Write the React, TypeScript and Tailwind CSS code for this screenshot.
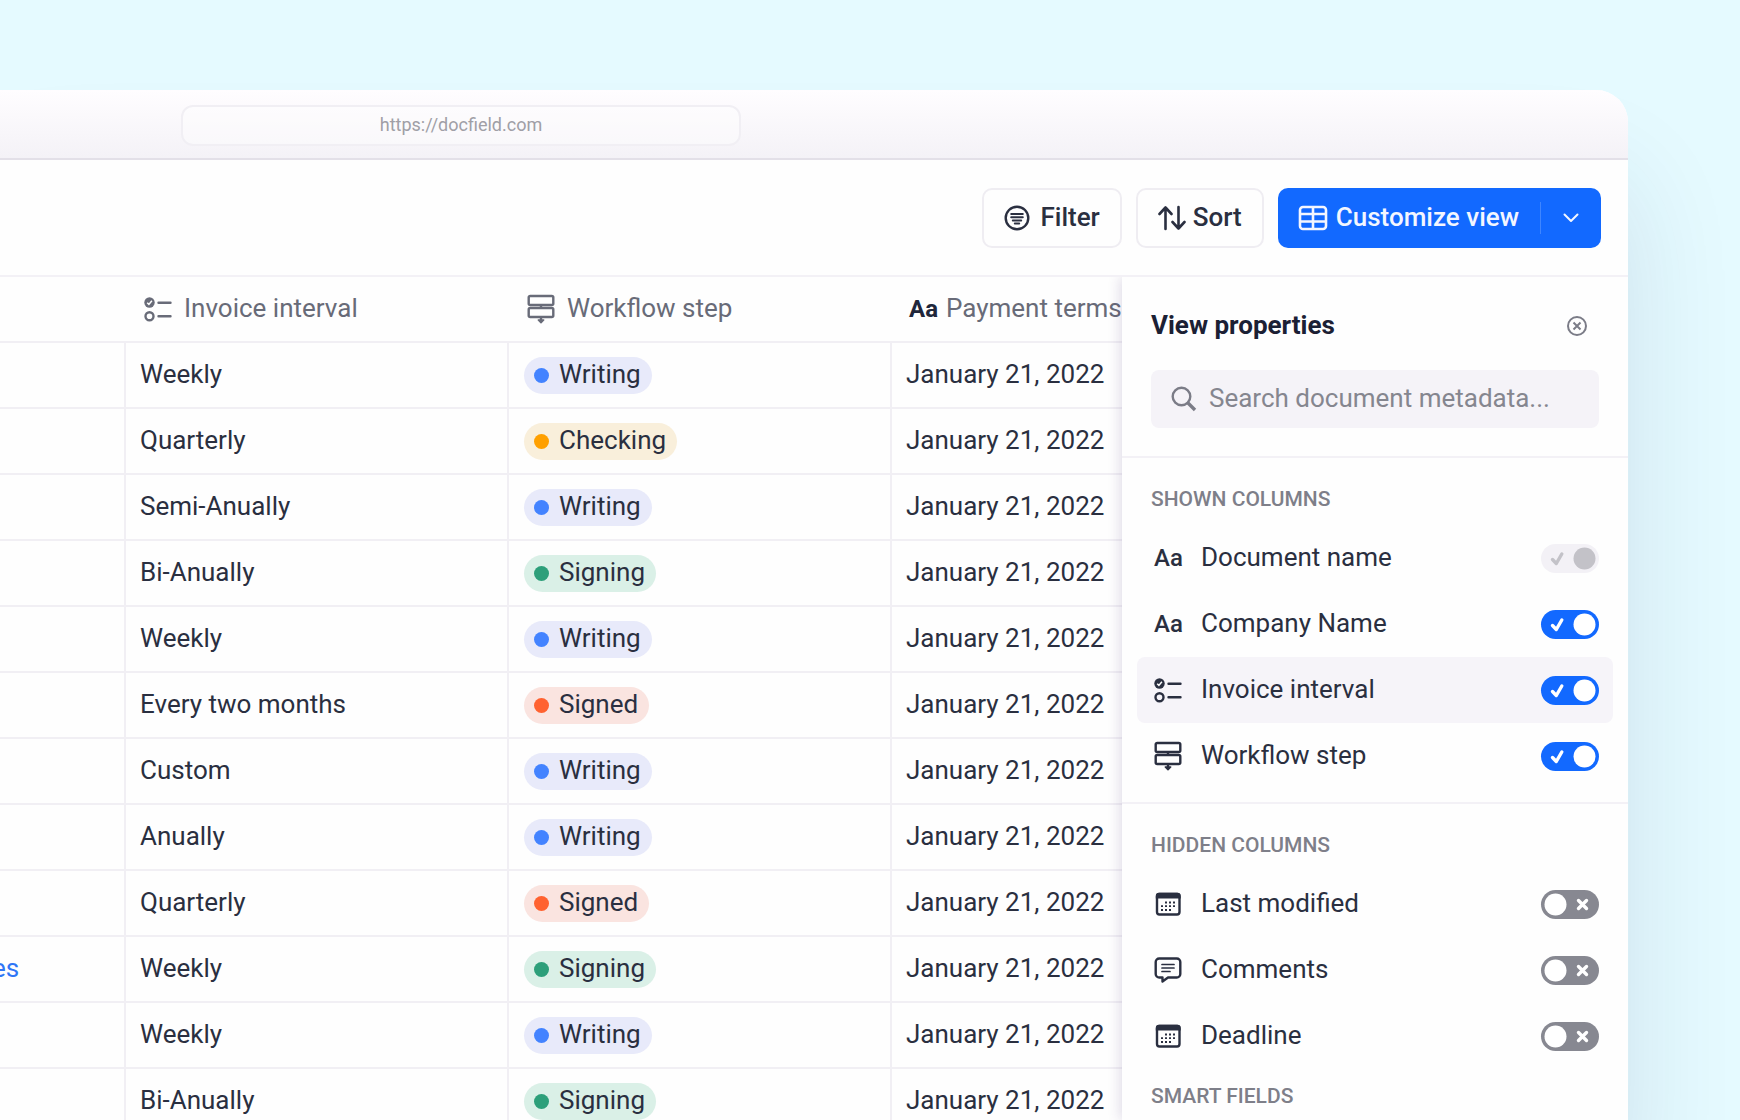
import { useState, type ReactNode } from "react";

type Step = "Writing" | "Checking" | "Signing" | "Signed";

const rows: { company?: string; interval: string; step: Step }[] = [
  { interval: "Weekly", step: "Writing" },
  { interval: "Quarterly", step: "Checking" },
  { interval: "Semi-Anually", step: "Writing" },
  { interval: "Bi-Anually", step: "Signing" },
  { interval: "Weekly", step: "Writing" },
  { interval: "Every two months", step: "Signed" },
  { interval: "Custom", step: "Writing" },
  { interval: "Anually", step: "Writing" },
  { interval: "Quarterly", step: "Signed" },
  { company: "es", interval: "Weekly", step: "Signing" },
  { interval: "Weekly", step: "Writing" },
  { interval: "Bi-Anually", step: "Signing" },
];

const stepStyles: Record<Step, { pill: string; dot: string }> = {
  Writing: { pill: "bg-[#e8eafa]", dot: "bg-[#4383ff]" },
  Checking: { pill: "bg-[#f9efdb]", dot: "bg-[#ffa000]" },
  Signing: { pill: "bg-[#daf0e7]", dot: "bg-[#2d9f7a]" },
  Signed: { pill: "bg-[#fae4e0]", dot: "bg-[#ff6230]" },
};

function ListIcon() {
  return (
    <svg width="28" height="28" viewBox="0 0 28 28" fill="none" stroke="currentColor" strokeWidth="2.4">
      <circle cx="5.5" cy="7.5" r="5.2" fill="currentColor" stroke="none" />
      <path d="M3.2 7.7l1.7 1.7 3-3.6" stroke="white" strokeWidth="1.5" />
      <circle cx="5.5" cy="21.2" r="4" />
      <path d="M14.5 7.8h12M14.5 21.2h12" strokeLinecap="round" />
    </svg>
  );
}

function WorkflowIcon() {
  return (
    <svg width="28" height="30" viewBox="0 0 28 30" fill="none" stroke="currentColor" strokeWidth="2.4">
      <rect x="1.7" y="2" width="24.6" height="9" rx="1.5" />
      <rect x="1.7" y="14" width="24.6" height="9" rx="1.5" />
      <path d="M14 11v3M14 23v3" />
      <path d="M11.3 26h5.4L14 28.8z" fill="currentColor" strokeWidth="1.5" strokeLinejoin="round" />
    </svg>
  );
}

function CalendarIcon() {
  return (
    <svg width="28" height="28" viewBox="0 0 28 28" fill="none" stroke="currentColor" strokeWidth="2.4">
      <rect x="3" y="4" width="22.5" height="20.5" rx="2.5" />
      <path d="M1.8 6a3.2 3.2 0 0 1 3.2-3.2h18.5a3.2 3.2 0 0 1 3.2 3.2v2.5H1.800z" fill="currentColor" stroke="none" />
      <path d="M11 12.5h12M7 16.2h16M7 20h12" strokeDasharray="2 2" strokeWidth="1.8" />
    </svg>
  );
}

function CommentIcon() {
  return (
    <svg width="28" height="28" viewBox="0 0 28 28" fill="none" stroke="currentColor" strokeWidth="2.4" strokeLinejoin="round">
      <path d="M5.2 2.5h17.6a3.5 3.5 0 0 1 3.5 3.5v12a3.5 3.5 0 0 1-3.5 3.5H14L8.5 25.5V21.5H5.2A3.5 3.5 0 0 1 1.7 18V6A3.5 3.5 0 0 1 5.2 2.5z" />
      <path d="M8 8.5h12M8 12h12M8 15.5h8" strokeWidth="1.7" strokeLinecap="round" />
    </svg>
  );
}

function FilterIcon() {
  return (
    <svg width="26" height="26" viewBox="0 0 26 26" fill="none" stroke="currentColor" strokeWidth="2.4" strokeLinecap="round">
      <circle cx="13" cy="13" r="11.3" />
      <path d="M7.2 9h11.6M7.2 12.2h11.6M8.8 15.4h8.4M10.8 18.6h4.4" strokeWidth="2" />
    </svg>
  );
}

function SortIcon() {
  return (
    <svg width="28" height="26" viewBox="0 0 28 26" fill="none" stroke="currentColor" strokeWidth="2.6" strokeLinecap="round" strokeLinejoin="round">
      <path d="M7.5 24V2.5M1.5 9l6-6.5 6 6.5M20.5 2v21.5M14.5 17l6 6.5 6-6.5" />
    </svg>
  );
}

function TableIcon() {
  return (
    <svg width="30" height="26" viewBox="0 0 30 26" fill="none" stroke="currentColor" strokeWidth="2.6">
      <rect x="2" y="2" width="26" height="22" rx="3" />
      <path d="M15 2v22M2 9h26M2 16.5h26" />
    </svg>
  );
}

function SearchIcon() {
  return (
    <svg width="26" height="26" viewBox="0 0 26 26" fill="none" stroke="currentColor" className="shrink-0">
      <circle cx="10.5" cy="10.5" r="8.8" strokeWidth="2.4" />
      <path d="M17 17l7 7" strokeWidth="3.4" />
    </svg>
  );
}

function Pill({ step }: { step: Step }) {
  const style = stepStyles[step];
  return (
    <span className={`flex h-[37px] w-fit items-center gap-[10px] rounded-full pl-[10px] pr-[11px] ${style.pill}`}>
      <span className={`size-[15px] rounded-full ${style.dot}`} />
      <span className="pb-[2px]">{step}</span>
    </span>
  );
}

function Toggle({ id, defaultOn, disabled = false }: { id: string; defaultOn: boolean; disabled?: boolean }) {
  const [on, setOn] = useState(defaultOn);
  return (
    <span className="grid">
      <input
        id={id}
        type="checkbox"
        role="switch"
        checked={on}
        disabled={disabled}
        onChange={(e) => setOn(e.target.checked)}
        className="col-start-1 row-start-1 h-[29px] w-[58px] appearance-none rounded-full bg-[#878891] checked:bg-[#1269ff] disabled:bg-[#f3f1f6]"
      />
      <svg
        viewBox="0 0 58 29"
        className={`pointer-events-none col-start-1 row-start-1 h-[29px] w-[58px] ${disabled ? "text-[#c3c2c8]" : "text-white"}`}
        fill="none"
        stroke="currentColor"
        strokeWidth="3.4"
        strokeLinecap="round"
      >
        <circle cx={on ? 43.5 : 14.5} cy="14.5" r="11" fill="currentColor" stroke="none" />
        {on ? <path d="M11.5 15.5l3.8 4 5.500-9.500" strokeLinejoin="round" /> : <path d="M37.5 10.5l8 8M45.5 10.5l-8 8" />}
      </svg>
    </span>
  );
}

function Aa() {
  return <span className="text-[24px] font-medium">Aa</span>;
}

type Field = { id: string; label: string; icon: ReactNode; on: boolean; disabled?: boolean; active?: boolean };

const shown: Field[] = [
  { id: "document-name", label: "Document name", icon: <Aa />, on: true, disabled: true },
  { id: "company-name", label: "Company Name", icon: <Aa />, on: true },
  { id: "invoice-interval", label: "Invoice interval", icon: <ListIcon />, on: true, active: true },
  { id: "workflow-step", label: "Workflow step", icon: <WorkflowIcon />, on: true },
];

const hidden: Field[] = [
  { id: "last-modified", label: "Last modified", icon: <CalendarIcon />, on: false },
  { id: "comments", label: "Comments", icon: <CommentIcon />, on: false },
  { id: "deadline", label: "Deadline", icon: <CalendarIcon />, on: false },
];

function FieldList({ fields }: { fields: Field[] }) {
  return (
    <ul className="px-[15px]">
      {fields.map((field) => (
        <li key={field.id} className={`flex h-[66px] items-center rounded-lg px-[14px] ${field.active ? "bg-[#f6f4f9]" : ""}`}>
          <span className="flex w-[50px] items-center pl-[3px]">{field.icon}</span>
          <label htmlFor={field.id} className="flex-1 pb-[3px]">
            {field.label}
          </label>
          <Toggle id={field.id} defaultOn={field.on} disabled={field.disabled} />
        </li>
      ))}
    </ul>
  );
}

function ViewProperties() {
  return (
    <aside className="relative z-10 w-[506px] shrink-0 bg-[#fefefe] shadow-[-2px_0_12px_rgba(60,40,110,0.16)]">
      <div className="border-b-2 border-[#f3f1f6] px-[29px] pb-7 pt-8">
        <div className="flex h-8 items-center justify-between">
          <h2 className="font-bold text-[#1b2034]">View properties</h2>
          <button type="button" aria-label="Close" className="mr-3 pt-[2px] text-[#7b7c87]">
            <svg width="20" height="20" viewBox="0 0 20 20" fill="none" stroke="currentColor" strokeWidth="2">
              <circle cx="10" cy="10" r="9" />
              <path d="M6.5 6.5l7 7M13.5 6.5l-7 7" />
            </svg>
          </button>
        </div>
        <label className="mt-[29px] flex h-[58px] items-center gap-3 rounded-lg bg-[#f5f3f8] pl-5 text-[#7b7c87]">
          <SearchIcon />
          <input
            type="search"
            aria-label="Search document metadata"
            placeholder="Search document metadata..."
            className="min-w-0 flex-1 bg-transparent pb-[2px] outline-none placeholder:text-[#85868f]"
          />
        </label>
      </div>
      <section className="border-b-2 border-[#f3f1f6] pb-[13px]">
        <h3 className="px-[29px] pb-[11px] pt-[26px] text-[21px] font-medium leading-[30px] text-[#7e7f89]">SHOWN COLUMNS</h3>
        <FieldList fields={shown} />
      </section>
      <section>
        <h3 className="px-[29px] pb-[11px] pt-[26px] text-[21px] font-medium leading-[30px] text-[#7e7f89]">HIDDEN COLUMNS</h3>
        <FieldList fields={hidden} />
      </section>
      <h3 className="px-[29px] pt-3 text-[21px] font-medium leading-[30px] text-[#7e7f89]">SMART FIELDS</h3>
    </aside>
  );
}

function DocumentsTable() {
  const line = "border-[#f1eff4]";
  return (
    <div className="min-w-0 flex-1 overflow-hidden">
      <table className="w-full table-fixed border-separate border-spacing-0 whitespace-nowrap text-left">
        <colgroup>
          <col className="w-[124px]" />
          <col className="w-[383px]" />
          <col className="w-[383px]" />
          <col />
        </colgroup>
        <thead className="text-[#686b78]">
          <tr className="h-[66px]">
            <th className={`border-b-2 ${line}`} aria-label="Company" />
            <th className={`border-b-2 pl-5 font-normal ${line}`}>
              <span className="flex items-center gap-3">
                <ListIcon />
                <span className="pb-[2px]">Invoice interval</span>
              </span>
            </th>
            <th className={`border-b-2 pl-5 font-normal ${line}`}>
              <span className="flex items-center gap-3">
                <WorkflowIcon />
                <span className="pb-[2px]">Workflow step</span>
              </span>
            </th>
            <th className={`border-b-2 pl-[19px] font-normal ${line}`}>
              <span className="flex items-center gap-2">
                <span className="text-[24px] font-bold text-[#20263a]">Aa</span>
                <span className="pb-[2px]">Payment terms</span>
              </span>
            </th>
          </tr>
        </thead>
        <tbody>
          {rows.map((row, i) => (
            <tr key={i} className="h-[66px]">
              <td className={`border-b-2 pb-[2px] ${line}`}>
                {row.company && (
                  <a href="#company" className="-ml-2 text-[#2f76f6]">
                    {row.company}
                  </a>
                )}
              </td>
              <td className={`border-b-2 border-l-2 pb-[2px] pl-[14px] ${line}`}>{row.interval}</td>
              <td className={`border-b-2 border-l-2 pl-[15px] ${line}`}>
                <Pill step={row.step} />
              </td>
              <td className={`border-b-2 border-l-2 pb-[2px] pl-[14px] ${line}`}>January 21, 2022</td>
            </tr>
          ))}
        </tbody>
      </table>
    </div>
  );
}

export default function App() {
  return (
    <div className="flex h-screen flex-col overflow-hidden bg-[#e5faff] pt-[90px] font-['Roboto',sans-serif] text-[26px] leading-8 text-[#2a2f40]">
      <div className="mr-28 flex min-h-0 flex-1 flex-col rounded-tr-[32px] bg-[#fefefe] shadow-[0_90px_110px_rgba(30,50,100,0.12)]">
        <header className="flex h-[70px] shrink-0 items-center rounded-tr-[32px] border-b-2 border-[#e3e0e8] bg-gradient-to-b from-[#fffdff] to-[#f4f2f7] pl-[181px] pt-[2px]">
          <div className="flex h-[41px] w-[560px] items-center justify-center rounded-xl border-2 border-[#f1eff4] bg-white/40 text-[18px] text-[#a09fa6]">
            https://docfield.com
          </div>
        </header>
        <div className="flex h-[117px] shrink-0 items-center justify-end gap-[14px] border-b-2 border-[#f3f1f6] pr-[27px] font-medium">
          <button type="button" className="flex h-[60px] items-center gap-[10px] rounded-[10px] border-2 border-[#efedf2] px-5">
            <FilterIcon />
            <span className="pb-[2px]">Filter</span>
          </button>
          <button type="button" className="flex h-[60px] items-center gap-[7px] rounded-[10px] border-2 border-[#efedf2] px-5">
            <SortIcon />
            <span className="pb-[2px]">Sort</span>
          </button>
          <div className="flex h-[60px] items-center rounded-[10px] bg-[#1269ff] text-[#f3f6ff]">
            <button type="button" className="flex h-full items-center gap-2 pl-5 pr-[21px]">
              <TableIcon />
              <span className="pb-[2px]">Customize view</span>
            </button>
            <span className="h-8 w-px bg-[#3f86ff]" />
            <button type="button" aria-label="More view options" className="grid h-full w-[60px] place-items-center">
              <svg width="16" height="10" viewBox="0 0 16 10" fill="none" stroke="currentColor" strokeWidth="2" strokeLinecap="round" strokeLinejoin="round">
                <path d="M1.5 1.5L8 8l6.5-6.5" />
              </svg>
            </button>
          </div>
        </div>
        <div className="flex min-h-0 flex-1 overflow-hidden">
          <DocumentsTable />
          <ViewProperties />
        </div>
      </div>
    </div>
  );
}
